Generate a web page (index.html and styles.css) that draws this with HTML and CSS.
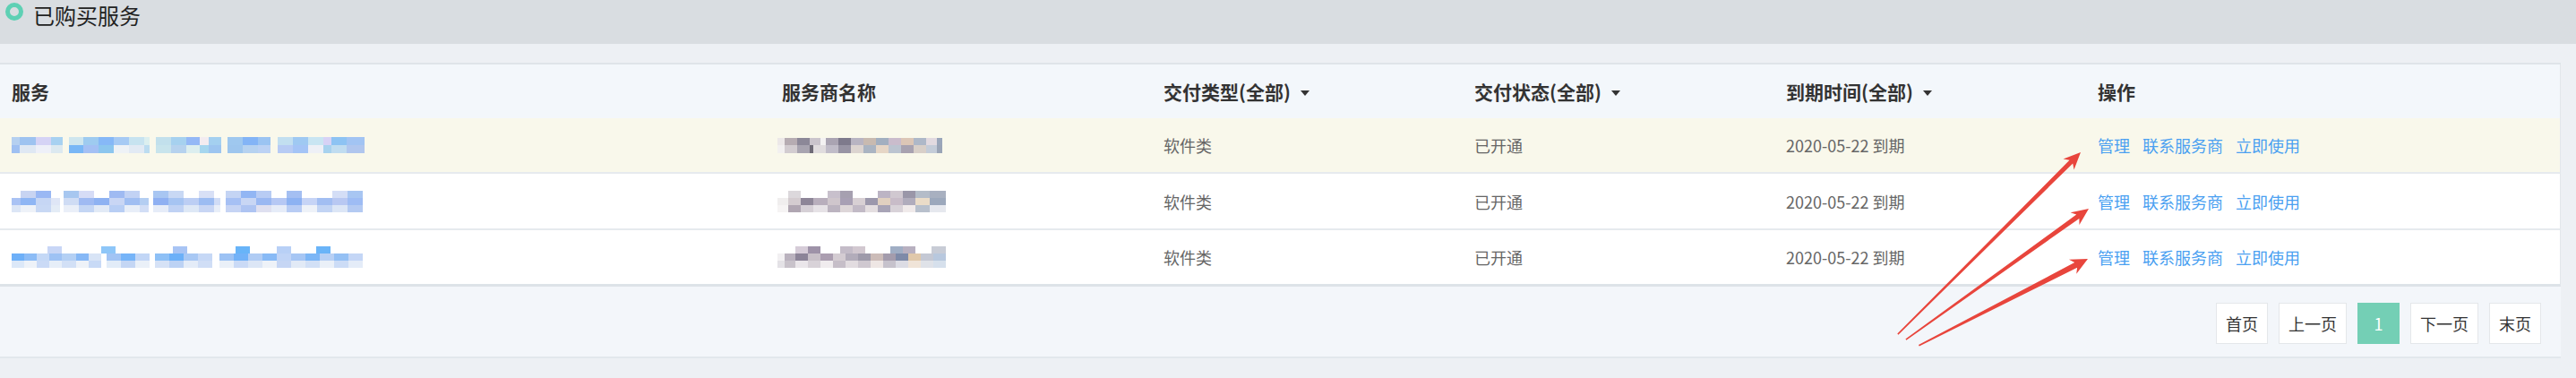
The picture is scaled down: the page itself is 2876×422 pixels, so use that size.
FILE: index.html
```html
<!DOCTYPE html>
<html lang="zh-CN">
<head>
<meta charset="utf-8">
<title>已购买服务</title>
<link rel="stylesheet" href="styles.css">
</head>
<body>
<div class="page">
  <header class="titlebar">
    <span class="ring"></span>
    <h1 class="title">已购买服务</h1>
  </header>

  <section class="panel">
    <div class="row head">
      <div class="cell">服务</div>
      <div class="cell">服务商名称</div>
      <div class="cell">交付类型(全部)<i class="caret"></i></div>
      <div class="cell">交付状态(全部)<i class="caret"></i></div>
      <div class="cell">到期时间(全部)<i class="caret"></i></div>
      <div class="cell">操作</div>
    </div>

    <div class="row body r1">
      <div class="cell"><span class="mos m-r1"></span></div>
      <div class="cell"><span class="mos n-r1"></span></div>
      <div class="cell">软件类</div>
      <div class="cell">已开通</div>
      <div class="cell">2020-05-22 到期</div>
      <div class="cell ops"><a class="op">管理</a><a class="op">联系服务商</a><a class="op">立即使用</a></div>
    </div>

    <div class="row body r2">
      <div class="cell"><span class="mos m-r2"></span></div>
      <div class="cell"><span class="mos n-r2"></span></div>
      <div class="cell">软件类</div>
      <div class="cell">已开通</div>
      <div class="cell">2020-05-22 到期</div>
      <div class="cell ops"><a class="op">管理</a><a class="op">联系服务商</a><a class="op">立即使用</a></div>
    </div>

    <div class="row body r3">
      <div class="cell"><span class="mos m-r3"></span></div>
      <div class="cell"><span class="mos n-r3"></span></div>
      <div class="cell">软件类</div>
      <div class="cell">已开通</div>
      <div class="cell">2020-05-22 到期</div>
      <div class="cell ops"><a class="op">管理</a><a class="op">联系服务商</a><a class="op">立即使用</a></div>
    </div>

    <nav class="pager">
      <a class="pg">首页</a>
      <a class="pg">上一页</a>
      <a class="pg cur">1</a>
      <a class="pg">下一页</a>
      <a class="pg">末页</a>
    </nav>
  </section>

  <svg class="arrows" width="2876" height="422" viewBox="0 0 2876 422" xmlns="http://www.w3.org/2000/svg">
    <g fill="#e8453c">
      <g transform="translate(2323 170) rotate(-44.86)">
        <polygon points="-288,-0.8 -15,-2.6 -19,-8.5 0,0 -19,8.5 -15,2.6 -288,0.8"/>
      </g>
      <g transform="translate(2332 233) rotate(-35.59)">
        <polygon points="-251,-0.8 -15,-2.7 -19,-8.5 0,0 -19,8.5 -15,2.7 -251,0.8"/>
      </g>
      <g transform="translate(2331 289) rotate(-27.17)">
        <polygon points="-212,-0.9 -15,-3.2 -19,-9 0,0 -19,9 -15,3.2 -212,0.9"/>
      </g>
    </g>
  </svg>
</div>
</body>
</html>
```

FILE: styles.css
```css
* { box-sizing: border-box; }

html, body {
  margin: 0;
  padding: 0;
  background: #edf0f4;
}

body {
  font-family: "Noto Sans CJK SC", "Microsoft YaHei", "Noto Sans", sans-serif;
  color: #333;
}

.page {
  position: relative;
  width: 2876px;
  height: 422px;
  overflow: hidden;
  background: #edf0f4;
}

/* ---------- title bar ---------- */
.titlebar {
  display: flex;
  align-items: flex-start;
  height: 49px;
  padding-top: 2px;
  background: #d9dde1;
}

.ring {
  flex: none;
  width: 20px;
  height: 20px;
  margin: 1px 0 0 6px;
  border: 5px solid #5ed0b4;
  border-radius: 50%;
}

.title {
  margin: 0 0 0 11px;
  font-size: 24px;
  font-weight: 400;
  line-height: 29px;
  color: #222;
}

/* ---------- table panel ---------- */
.panel {
  width: 2859px;
  margin-top: 21px;
  border-top: 2px solid #dfe4e9;
}

.row {
  display: grid;
  grid-template-columns: 860px 426px 347px 348px 348px 1fr;
  align-items: center;
  border-right: 1px solid #e3e7eb;
}

.cell {
  padding-left: 13px;
  white-space: nowrap;
}

.head {
  height: 60px;
  background: #f3f7fb;
  font-size: 21px;
  font-weight: 700;
  color: #333;
}

.caret {
  display: inline-block;
  width: 0;
  height: 0;
  margin-left: 11px;
  border-left: 5px solid transparent;
  border-right: 5px solid transparent;
  border-top: 6px solid #333;
  vertical-align: 4px;
}

.body {
  background: #fff;
  font-size: 18px;
  color: #666;
  border-bottom: 2px solid #e6eaee;
  box-sizing: content-box;
}

.r1 { height: 60px; background: #f9f8eb; }
.r2 { height: 61px; }
.r3 { height: 60px; border-bottom: 3px solid #dde3e8; }

.op {
  color: #4aa0f1;
  margin-right: 14px;
  text-decoration: none;
  cursor: pointer;
}

/* ---------- mosaic (censored content) ---------- */
.mos { display: block; }

.m-r1 {
  width: 394px;
  height: 18px;
  background:
    linear-gradient(90deg, #b5d0f0 0 9px, #9ec3f0 9px 27px, #d5d3f5 27px 44px, #a7d1f1 44px 57px, transparent 57px 64px, #cfe6ee 64px 80px, #9ecbf0 80px 97px, #86b8f7 97px 114px, #a6caf4 114px 131px, #c7e3f0 131px 148px, #dcefef 148px 154px, transparent 154px 161px, #c2e0ec 161px 178px, #a6d1ef 178px 195px, #94b8f6 195px 210px, #f3ecf0 210px 220px, #a4d0f0 220px 234px, transparent 234px 241px, #9fc8ef 241px 258px, #83b4f6 258px 275px, #9bc4f2 275px 289px, transparent 289px 297px, #c2dff0 297px 314px, #9fc9f2 314px 331px, #c9e5f2 331px 348px, #d7d2f5 348px 357px, #8dc3f3 357px 374px, #a2c4f3 374px 394px) 0 0 / 100% 9px no-repeat,
    linear-gradient(90deg, #9fc0f2 0 9px, #dfe8f3 9px 27px, #eef0f8 27px 44px, #dce9f0 44px 57px, transparent 57px 64px, #79b7f6 64px 80px, #a4c0f4 80px 97px, #8cc6ee 97px 114px, #eef2f6 114px 131px, #e2eaf4 131px 148px, #bcdcf0 148px 154px, transparent 154px 161px, #c8e4ec 161px 178px, #b6d2ee 178px 195px, #dceeef 195px 210px, #a6d6ee 210px 220px, #9dc5f0 220px 234px, transparent 234px 241px, #9ec6ee 241px 258px, #b6d2f0 258px 275px, #bcd2f4 275px 289px, transparent 289px 297px, #b7cbf4 297px 314px, #a4c4f6 314px 331px, #eef0f6 331px 348px, #a8d2ee 348px 357px, #c0dcf0 357px 374px, #b0c6ee 374px 394px) 0 9px / 100% 9px no-repeat;
}

.m-r2 {
  width: 392px;
  height: 24px;
  background:
    linear-gradient(90deg, transparent 0 10px, #c8d4f2 10px 27px, #9ab8f4 27px 44px, transparent 44px 58px, #a7c7f0 58px 75px, #d6dcf6 75px 92px, transparent 92px 109px, #9fbaf2 109px 126px, #c2d2f4 126px 143px, transparent 143px 158px, #a8c6f2 158px 175px, #c8d8f4 175px 192px, transparent 192px 209px, #d8e0f6 209px 226px, transparent 226px 239px, #c4d4f4 239px 256px, #92b6f4 256px 273px, #b8ccf4 273px 290px, transparent 290px 307px, #a4bff2 307px 324px, transparent 324px 358px, #d4def6 358px 375px, #a8c6f2 375px 391px) 0 0 / 100% 8px no-repeat,
    linear-gradient(90deg, #a9c2f4 0 10px, #8fb6f4 10px 27px, #c6d6f4 27px 44px, #dfe6f6 44px 54px, transparent 54px 58px, #cfdcf4 58px 75px, #9fbaf2 75px 92px, #8eb2f2 92px 109px, #c9d6f4 109px 126px, #a0bef2 126px 143px, #b4cef2 143px 153px, transparent 153px 158px, #8fb0f2 158px 175px, #a6c4f2 175px 192px, #bccef4 192px 209px, #9cbcf2 209px 226px, #d0dcf6 226px 233px, transparent 233px 239px, #a6c0f4 239px 256px, #c8d6f4 256px 273px, #9ab8f2 273px 290px, #b6c8f4 290px 307px, #8db2f2 307px 324px, #c6d4f6 324px 341px, #a2bef2 341px 358px, #b8c8f2 358px 375px, #9ebcf4 375px 391px) 0 8px / 100% 8px no-repeat,
    linear-gradient(90deg, #dce6f6 0 10px, #eef2f8 10px 27px, #c8d8f4 27px 44px, #e4ecf6 44px 54px, transparent 54px 58px, #eaeff8 58px 75px, #c4d6f4 75px 92px, #e2eaf6 92px 109px, #b8cef4 109px 126px, #e8eef8 126px 143px, #d2def6 143px 153px, transparent 153px 158px, #e6ecf8 158px 175px, #c0d2f4 175px 192px, #dee8f6 192px 209px, #c8d6f4 209px 226px, #e8eef8 226px 233px, transparent 233px 239px, #c6d4f4 239px 256px, #aec4f2 256px 273px, #dfe0f0 273px 290px, #e6ecf8 290px 307px, #b8ccf4 307px 324px, #eef2f8 324px 341px, #c2d4f4 341px 358px, #dce6f6 358px 375px, #b4caf2 375px 391px) 0 16px / 100% 8px no-repeat;
}

.m-r3 {
  width: 392px;
  height: 24px;
  background:
    linear-gradient(90deg, transparent 0 40px, #c8d6f6 40px 56px, transparent 56px 100px, #8ec6f8 100px 116px, transparent 116px 180px, #a8c4f4 180px 196px, transparent 196px 250px, #68b4f8 250px 266px, transparent 266px 296px, #b8d0f6 296px 312px, transparent 312px 340px, #6ab4f8 340px 356px, transparent 356px 392px) 0 0 / 100% 8px no-repeat,
    linear-gradient(90deg, #6eb0f8 0 14px, #8cbcf6 14px 28px, #c4d8f6 28px 42px, #9ec2f4 42px 56px, #b4d0f4 56px 72px, #86b8f6 72px 86px, #d8e4f6 86px 100px, transparent 100px 106px, #a2c4f4 106px 122px, #76b4f8 122px 138px, #c2d6f6 138px 154px, transparent 154px 160px, #8ec0f6 160px 176px, #6cb0f8 176px 192px, #a8c8f4 192px 208px, #c6d8f6 208px 224px, transparent 224px 232px, #9cc2f4 232px 248px, #72b2f8 248px 264px, #b0ccf4 264px 280px, #88baf6 280px 296px, #c0d4f6 296px 312px, #a6c6f4 312px 328px, #7cb6f6 328px 344px, #b8d0f4 344px 360px, #94c0f4 360px 376px, #c4d6f6 376px 392px) 0 8px / 100% 8px no-repeat,
    linear-gradient(90deg, #dce8f8 0 14px, #eef2f8 14px 28px, #cadaf6 28px 42px, #e6eef8 42px 56px, #d2e0f6 56px 72px, #eef2f8 72px 86px, #c8daf6 86px 100px, transparent 100px 106px, #e2ecf8 106px 122px, #c4d6f4 122px 138px, #eaf0f8 138px 154px, transparent 154px 160px, #d6e2f6 160px 176px, #bcd2f4 176px 192px, #e4ecf8 192px 208px, #d0def6 208px 224px, transparent 224px 232px, #eaf0f8 232px 248px, #cadaf6 248px 264px, #dce6f6 264px 280px, #eef2f8 280px 296px, #c6d6f4 296px 312px, #e2eaf6 312px 328px, #d2e0f6 328px 344px, #eaf0f8 344px 360px, #ccdcf6 360px 376px, #e4ecf8 376px 392px) 0 16px / 100% 8px no-repeat;
}

.n-r1, .n-r2, .n-r3 { margin-left: -5px; width: 188px; }

.n-r1 {
  height: 17px;
  background:
    linear-gradient(90deg, #ece8e8 0 8px, #b6acb2 8px 22px, #8c8898 22px 36px, #cac4cc 36px 48px, #f4f2f2 48px 54px, #aaa4b2 54px 68px, #7e7a8c 68px 82px, #b8b4c2 82px 96px, #c8bab0 96px 110px, #a2afc0 110px 124px, #cabccc 124px 138px, #dcc6b6 138px 152px, #aeb8c8 152px 166px, #e2dae0 166px 178px, #9aa6ba 178px 184px, transparent 184px 188px) 0 0 / 100% 8px no-repeat,
    linear-gradient(90deg, #f2f0f0 0 8px, #d2ccd0 8px 22px, #a8a4b0 22px 36px, #6e6a76 36px 40px, #e0dcde 40px 54px, #c0bcc8 54px 68px, #9894a4 68px 82px, #dcd4d0 82px 96px, #aab4c2 96px 110px, #e6d6c6 110px 124px, #bcc4d0 124px 138px, #a8a2b0 138px 152px, #d8cfc8 152px 166px, #c4ccd8 166px 178px, #9aa4b6 178px 184px, transparent 184px 188px) 0 8px / 100% 9px no-repeat;
}

.n-r2 {
  height: 24px;
  background:
    linear-gradient(90deg, transparent 0 12px, #dcd8dc 12px 26px, transparent 26px 56px, #c8c0cc 56px 70px, #a6a0b0 70px 84px, transparent 84px 112px, #bcb4c4 112px 126px, #d0c8d0 126px 140px, #9a96a8 140px 154px, #b4bcc8 154px 170px, #a8b0c0 170px 188px) 0 0 / 100% 8px no-repeat,
    linear-gradient(90deg, #f0eeee 0 12px, #d4ccd0 12px 26px, #8e8698 26px 40px, #b8aebc 40px 56px, #cfc6cc 56px 70px, #a8a0b4 70px 84px, #d8d0d4 84px 98px, #9c98ac 98px 112px, #e0d0c0 112px 126px, #c8bcc8 126px 140px, #b0acbc 140px 154px, #eadcc8 154px 170px, #9ca8bc 170px 188px) 0 8px / 100% 8px no-repeat,
    linear-gradient(90deg, #f6f4f4 0 12px, #b0a6b2 12px 26px, #d6d0d6 26px 40px, #e6e2e6 40px 56px, #bcb4c0 56px 70px, #ddd6d8 70px 84px, #c2bac6 84px 98px, #e4dee0 98px 112px, #a8a4b6 112px 126px, #d8d2d8 126px 140px, #f0eaea 140px 154px, #b8c0cc 154px 170px, #e6e8ee 170px 188px) 0 16px / 100% 8px no-repeat;
}

.n-r3 {
  height: 24px;
  background:
    linear-gradient(90deg, transparent 0 20px, #d6ccd8 20px 34px, #9e92a8 34px 48px, transparent 48px 70px, #c4bcc8 70px 84px, #d2c8d0 84px 98px, transparent 98px 126px, #a0aec4 126px 140px, #b8b0c0 140px 154px, transparent 154px 172px, #c8ccd6 172px 188px) 0 0 / 100% 8px no-repeat,
    linear-gradient(90deg, #f2f0f2 0 8px, #bab2be 8px 20px, #8c8498 20px 34px, #c8c0c8 34px 48px, #ab9eb0 48px 62px, #d4ccd2 62px 76px, #b2acba 76px 90px, #9e9aaa 90px 104px, #ccbcb8 104px 118px, #a49cac 118px 132px, #7e8aa8 132px 146px, #e0c8aa 146px 160px, #c4c8d4 160px 174px, #b8c8de 174px 188px) 0 8px / 100% 8px no-repeat,
    linear-gradient(90deg, #e4e2e6 0 8px, #c8c2ca 8px 20px, #eae6ea 20px 34px, #d8d2d8 34px 48px, #f0ecee 48px 62px, #c6bec8 62px 76px, #e2dce0 76px 90px, #cfc8d0 90px 104px, #eee6e4 104px 118px, #c6c2cc 118px 132px, #dcdce4 132px 146px, #f0e4d8 146px 160px, #dfe2e8 160px 174px, #d6e0ec 174px 188px) 0 16px / 100% 8px no-repeat;
}

/* ---------- pager ---------- */
.pager {
  display: flex;
  justify-content: flex-end;
  align-items: flex-start;
  gap: 12px;
  height: 80px;
  padding: 18px 22px 0 0;
  background: #f3f6fa;
  border-bottom: 2px solid #e2e7ec;
}

.pg {
  display: block;
  height: 46px;
  padding: 0 10px;
  border: 1px solid #e4e7ea;
  background: #fff;
  font-size: 18px;
  line-height: 44px;
  color: #333;
  text-decoration: none;
  cursor: pointer;
}

.pg.cur {
  width: 47px;
  padding: 0;
  text-align: center;
  background: #74cfb5;
  border-color: #74cfb5;
  color: #fff;
}

/* ---------- annotation arrows ---------- */
.arrows {
  position: absolute;
  left: 0;
  top: 0;
  pointer-events: none;
}
```
